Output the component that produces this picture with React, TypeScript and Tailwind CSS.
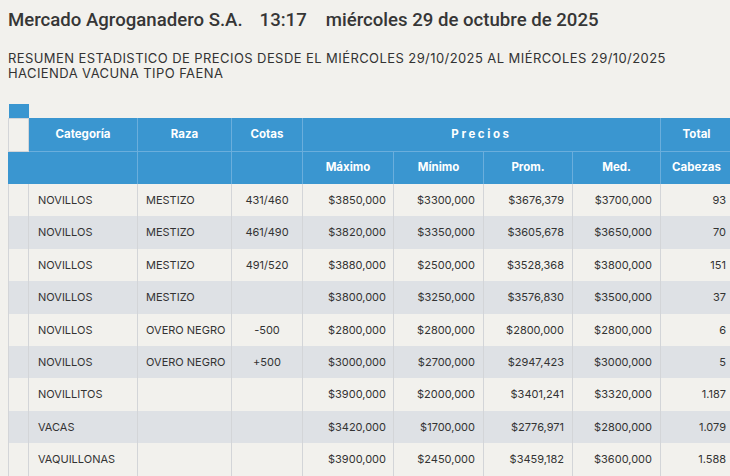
import React from "react";

type Row = {
  cat: string;
  raza: string;
  cotas: string;
  max: string;
  min: string;
  prom: string;
  med: string;
  cab: string;
};

const rows: Row[] = [
  { cat: "NOVILLOS", raza: "MESTIZO", cotas: "431/460", max: "$3850,000", min: "$3300,000", prom: "$3676,379", med: "$3700,000", cab: "93" },
  { cat: "NOVILLOS", raza: "MESTIZO", cotas: "461/490", max: "$3820,000", min: "$3350,000", prom: "$3605,678", med: "$3650,000", cab: "70" },
  { cat: "NOVILLOS", raza: "MESTIZO", cotas: "491/520", max: "$3880,000", min: "$2500,000", prom: "$3528,368", med: "$3800,000", cab: "151" },
  { cat: "NOVILLOS", raza: "MESTIZO", cotas: "", max: "$3800,000", min: "$3250,000", prom: "$3576,830", med: "$3500,000", cab: "37" },
  { cat: "NOVILLOS", raza: "OVERO NEGRO", cotas: "-500", max: "$2800,000", min: "$2800,000", prom: "$2800,000", med: "$2800,000", cab: "6" },
  { cat: "NOVILLOS", raza: "OVERO NEGRO", cotas: "+500", max: "$3000,000", min: "$2700,000", prom: "$2947,423", med: "$3000,000", cab: "5" },
  { cat: "NOVILLITOS", raza: "", cotas: "", max: "$3900,000", min: "$2000,000", prom: "$3401,241", med: "$3320,000", cab: "1.187" },
  { cat: "VACAS", raza: "", cotas: "", max: "$3420,000", min: "$1700,000", prom: "$2776,971", med: "$2800,000", cab: "1.079" },
  { cat: "VAQUILLONAS", raza: "", cotas: "", max: "$3900,000", min: "$2450,000", prom: "$3459,182", med: "$3600,000", cab: "1.588" },
];

const font = { fontFamily: "Inter, 'Noto Sans', sans-serif" };
const titleFont = { fontFamily: "Roboto, 'Noto Sans', sans-serif" };

export default function App() {
  const hd = "border-x border-[#6aaedc] text-white font-bold text-[11.5px] text-center align-middle p-0 whitespace-nowrap";
  const td = "border-x border-[#d3d5d8] text-[11px] text-[#333333] align-middle p-0 whitespace-nowrap";
  return (
    <div className="w-[730px] h-[476px] overflow-hidden bg-[#f2f1ed] text-[#333333]" style={font}>
      <div className="pl-2 pt-2">
        <div className="flex items-baseline text-[18.6px] leading-[24px] font-medium text-[#363636]" style={titleFont}>
          <span>Mercado Agroganadero S.A.</span>
          <span className="ml-[17px]">13:17</span>
          <span className="ml-[19px]">miércoles 29 de octubre de 2025</span>
        </div>
        <div className="mt-[19px] text-[13px] leading-[15px] uppercase tracking-[0.42px] whitespace-nowrap">
          <div>RESUMEN ESTADISTICO DE PRECIOS DESDE EL MIÉRCOLES 29/10/2025 AL MIÉRCOLES 29/10/2025</div>
          <div>HACIENDA VACUNA TIPO FAENA</div>
        </div>
        <table className="mt-[23px] table-fixed border-collapse w-[724px]">
          <colgroup>
            <col className="w-[20px]" />
            <col className="w-[109px]" />
            <col className="w-[94px]" />
            <col className="w-[71px]" />
            <col className="w-[91px]" />
            <col className="w-[90px]" />
            <col className="w-[89px]" />
            <col className="w-[88px]" />
            <col className="w-[72px]" />
          </colgroup>
          <thead>
            <tr className="h-[14px]">
              <td className="bg-[#3a96d0] p-0"></td>
              <td colSpan={8} className="p-0"></td>
            </tr>
            <tr className="h-[33px] bg-[#3a96d0]">
              <th className="bg-[#f2f1ed] border border-[#d3d5d8] p-0"></th>
              <th className={hd}>Categoría</th>
              <th className={hd}>Raza</th>
              <th className={hd}>Cotas</th>
              <th colSpan={4} className={hd + " tracking-[2.6px]"}>Precios</th>
              <th className={hd}>Total</th>
            </tr>
            <tr className="h-[33px] bg-[#3a96d0] border-t border-[#6aaedc]">
              <th className="border-x border-[#3a96d0] p-0"></th>
              <th className={hd}></th>
              <th className={hd}></th>
              <th className={hd}></th>
              <th className={hd}>Máximo</th>
              <th className={hd}>Mínimo</th>
              <th className={hd}>Prom.</th>
              <th className={hd}>Med.</th>
              <th className={hd}>Cabezas</th>
            </tr>
          </thead>
          <tbody>
            {rows.map((r, i) => (
              <tr key={i} className={"h-[32.4px] " + (i % 2 === 1 ? "bg-[#dee1e5]" : "bg-[#f2f1ed]")}>
                <td className={td}></td>
                <td className={td + " text-left pl-[9px]"}>{r.cat}</td>
                <td className={td + " text-left pl-[8px]"}>{r.raza}</td>
                <td className={td + " text-center"}>{r.cotas}</td>
                <td className={td + " text-right pr-[7px]"}>{r.max}</td>
                <td className={td + " text-right pr-[8px]"}>{r.min}</td>
                <td className={td + " text-right pr-[8px]"}>{r.prom}</td>
                <td className={td + " text-right pr-[8px]"}>{r.med}</td>
                <td className={td + " text-right pr-[6px]"}>{r.cab}</td>
              </tr>
            ))}
          </tbody>
        </table>
      </div>
    </div>
  );
}
